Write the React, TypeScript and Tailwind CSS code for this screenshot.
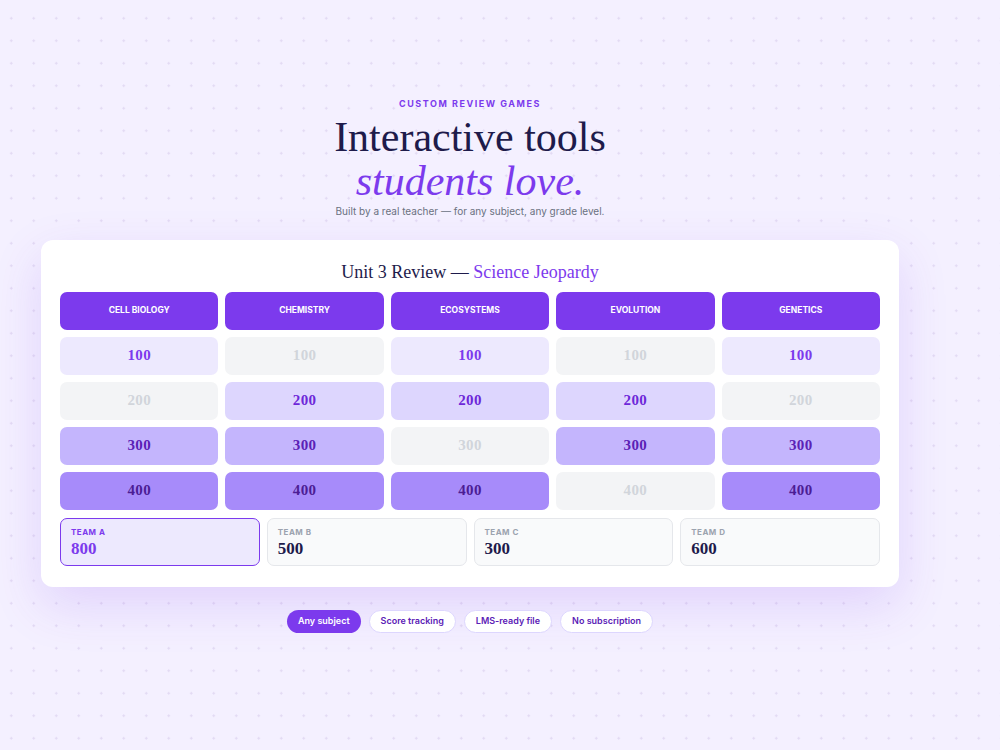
import React from "react";

const serif = "font-['Liberation_Serif',_'DejaVu_Serif',_serif]";
const sans = "font-['Inter',_'Lato',_sans-serif]";

type Cell = { points: number; used: boolean };

const categories = ["Cell Biology", "Chemistry", "Ecosystems", "Evolution", "Genetics"];

// board[row][col] — true means the question is still open
const open: boolean[][] = [
    [true, false, true, false, true],
    [false, true, true, true, false],
    [true, true, false, true, true],
    [true, true, true, false, true],
];

const tiers: Record<number, string> = {
    100: "bg-[#ede9fe] text-[#7c3aed]",
    200: "bg-[#ddd6fe] text-[#6d28d9]",
    300: "bg-[#c4b5fd] text-[#5b21b6]",
    400: "bg-[#a78bfa] text-[#4c1d95]",
};

const teams = [
    { name: "Team A", score: 800, active: true },
    { name: "Team B", score: 500, active: false },
    { name: "Team C", score: 300, active: false },
    { name: "Team D", score: 600, active: false },
];

const tags = ["Any subject", "Score tracking", "LMS-ready file", "No subscription"];

function BoardCell(props: { cell: Cell }): React.JSX.Element {
    const { cell } = props;
    return (
        <div
            className={`h-[38px] rounded-[7px] flex items-center justify-center ${serif} text-[15px] font-bold tracking-wide ${
                cell.used ? "bg-[#f3f4f6] text-[#d1d5db]" : tiers[cell.points]
            }`}
        >
            {cell.points}
        </div>
    );
}

function TeamScore(props: { name: string; score: number; active: boolean }): React.JSX.Element {
    return (
        <div
            className={`h-[48px] rounded-[7px] border px-[10px] pt-[9px] flex flex-col ${
                props.active ? "bg-[#ede9fe] border-[#7c3aed]" : "bg-[#f9fafb] border-[#e5e7eb]"
            }`}
        >
            <div
                className={`${sans} text-[8px] font-bold uppercase tracking-[0.06em] leading-none ${
                    props.active ? "text-[#7c3aed]" : "text-[#9ca3af]"
                }`}
            >
                {props.name}
            </div>
            <div
                className={`${serif} text-[17px] font-bold leading-none mt-[4px] ${
                    props.active ? "text-[#7c3aed]" : "text-[#1e1b4b]"
                }`}
            >
                {props.score}
            </div>
        </div>
    );
}

export default function App(): React.JSX.Element {
    return (
        <div className="min-h-[750px] w-full bg-[#f4f0ff] bg-[radial-gradient(circle,#e2daf3_1px,transparent_1.3px)] bg-[size:22.5px_22.5px] bg-[position:0px_7px] overflow-hidden">
            <div className="ml-[41px] w-[858px] pt-[97px] flex flex-col items-center">
                <div className={`${sans} text-[9px] font-bold uppercase tracking-[0.17em] text-[#7c3aed]`}>
                    Custom Review Games
                </div>
                <h1 className={`${serif} mt-[4px] text-[42px] leading-[44px] text-[#1e1b4b] text-center`}>
                    <span className="block">Interactive tools</span>
                    <em className="block text-[#7c3aed] italic">students love.</em>
                </h1>
                <p className={`${sans} mt-[1px] text-[10px] text-[#6b7280]`}>
                    Built by a real teacher — for any subject, any grade level.
                </p>

                <div className="mt-[21px] w-full bg-white rounded-[12px] shadow-[0_18px_50px_rgba(124,58,237,0.16)] px-[19px] pt-[20px] pb-[21px]">
                    <div className={`${serif} text-center text-[18px] leading-[24px] text-[#1e1b4b]`}>
                        Unit 3 Review — <span className="text-[#7c3aed]">Science Jeopardy</span>
                    </div>

                    <div className="mt-[8px] grid grid-cols-5 gap-x-[7px] gap-y-[7px]">
                        {categories.map((c) => (
                            <div
                                key={c}
                                className={`h-[38px] rounded-[7px] bg-[#7c3aed] flex items-center justify-center ${sans} text-[8.5px] font-bold uppercase text-white`}
                            >
                                {c}
                            </div>
                        ))}
                        {open.map((row, r) =>
                            row.map((isOpen, c) => (
                                <BoardCell key={`${r}-${c}`} cell={{ points: (r + 1) * 100, used: !isOpen }} />
                            ))
                        )}
                    </div>

                    <div className="mt-[8px] grid grid-cols-4 gap-[7px]">
                        {teams.map((t) => (
                            <TeamScore key={t.name} {...t} />
                        ))}
                    </div>
                </div>

                <div className="mt-[23px] flex gap-[8px]">
                    {tags.map((t, i) => (
                        <span
                            key={t}
                            className={`h-[23px] px-[11px] rounded-full flex items-center ${sans} text-[9px] font-semibold ${
                                i === 0
                                    ? "bg-[#7c3aed] text-white"
                                    : "bg-white border border-[#ddd6fe] text-[#5b21b6]"
                            }`}
                        >
                            {t}
                        </span>
                    ))}
                </div>
            </div>
        </div>
    );
}
